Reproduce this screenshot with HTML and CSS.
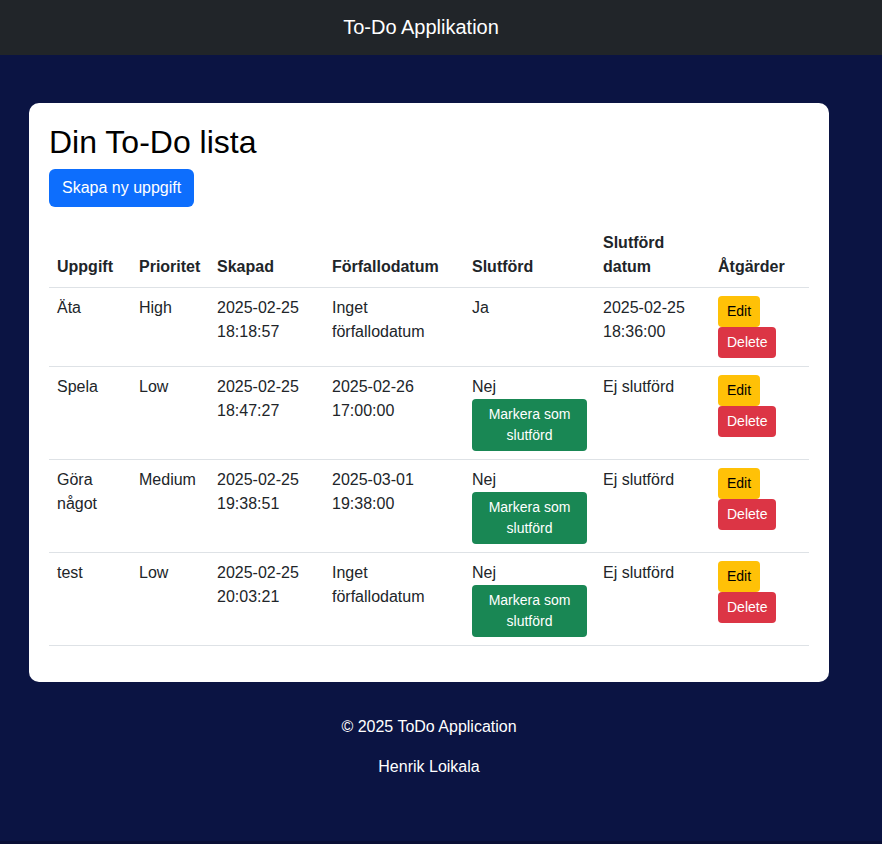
FILE: index.html
```html
<!DOCTYPE html>
<html lang="sv">
<head>
  <meta charset="utf-8">
  <meta name="viewport" content="width=device-width, initial-scale=1">
  <title>To-Do Applikation</title>
  <link rel="stylesheet" href="styles.css">
</head>
<body>
  <nav class="navbar">
    <a class="navbar-brand" href="#">To-Do Applikation</a>
  </nav>

  <main class="card">
    <h1 class="card-title">Din To-Do lista</h1>
    <a class="btn btn-primary" href="#">Skapa ny uppgift</a>

    <table class="tasks">
      <colgroup>
        <col class="col-task">
        <col class="col-priority">
        <col class="col-created">
        <col class="col-due">
        <col class="col-done">
        <col class="col-done-date">
        <col class="col-actions">
      </colgroup>
      <thead>
        <tr>
          <th scope="col">Uppgift</th>
          <th scope="col">Prioritet</th>
          <th scope="col">Skapad</th>
          <th scope="col">Förfallodatum</th>
          <th scope="col">Slutförd</th>
          <th scope="col">Slutförd datum</th>
          <th scope="col">Åtgärder</th>
        </tr>
      </thead>
      <tbody>
        <tr>
          <td>Äta</td>
          <td>High</td>
          <td>2025-02-25 18:18:57</td>
          <td>Inget förfallodatum</td>
          <td>Ja</td>
          <td>2025-02-25 18:36:00</td>
          <td>
            <div class="actions">
              <a class="btn btn-sm btn-warning" href="#">Edit</a>
              <button class="btn btn-sm btn-danger" type="button">Delete</button>
            </div>
          </td>
        </tr>
        <tr>
          <td>Spela</td>
          <td>Low</td>
          <td>2025-02-25 18:47:27</td>
          <td>2025-02-26 17:00:00</td>
          <td>Nej <button class="btn btn-sm btn-success" type="button">Markera som slutförd</button></td>
          <td>Ej slutförd</td>
          <td>
            <div class="actions">
              <a class="btn btn-sm btn-warning" href="#">Edit</a>
              <button class="btn btn-sm btn-danger" type="button">Delete</button>
            </div>
          </td>
        </tr>
        <tr>
          <td>Göra något</td>
          <td>Medium</td>
          <td>2025-02-25 19:38:51</td>
          <td>2025-03-01 19:38:00</td>
          <td>Nej <button class="btn btn-sm btn-success" type="button">Markera som slutförd</button></td>
          <td>Ej slutförd</td>
          <td>
            <div class="actions">
              <a class="btn btn-sm btn-warning" href="#">Edit</a>
              <button class="btn btn-sm btn-danger" type="button">Delete</button>
            </div>
          </td>
        </tr>
        <tr>
          <td>test</td>
          <td>Low</td>
          <td>2025-02-25 20:03:21</td>
          <td>Inget förfallodatum</td>
          <td>Nej <button class="btn btn-sm btn-success" type="button">Markera som slutförd</button></td>
          <td>Ej slutförd</td>
          <td>
            <div class="actions">
              <a class="btn btn-sm btn-warning" href="#">Edit</a>
              <button class="btn btn-sm btn-danger" type="button">Delete</button>
            </div>
          </td>
        </tr>
      </tbody>
    </table>
  </main>

  <footer class="footer">
    <p>© 2025 ToDo Application</p>
    <p>Henrik Loikala</p>
  </footer>
</body>
</html>
```

FILE: styles.css
```css
* {
  box-sizing: border-box;
}

body {
  display: flex;
  flex-direction: column;
  min-height: 100vh;
  margin: 0;
  border-bottom: 3px solid #0a0f36;
  background: #0b1443;
  color: #212529;
  font-family: "Liberation Sans", Arial, sans-serif;
  font-size: 16px;
  line-height: 24px;
}

.navbar {
  display: flex;
  justify-content: center;
  padding: 12px 24px 13px 0;
  background: #212529;
}

.navbar-brand {
  margin-right: 16px;
  color: #fff;
  font-size: 20px;
  line-height: 30px;
  text-decoration: none;
}

.card {
  align-self: center;
  width: calc(100% - 48px);
  max-width: 800px;
  margin-top: 48px;
  /* shifts the centre line to that of the navbar and footer */
  margin-right: 24px;
  padding: 20px;
  border-radius: 10px;
  background: #fff;
}

.card-title {
  margin: 0 0 8px;
  color: #000;
  font-size: 32px;
  font-weight: 400;
  line-height: 38px;
}

.btn {
  display: inline-block;
  padding: 6px 12px;
  border: 1px solid transparent;
  border-radius: 6px;
  font: inherit;
  text-align: center;
  text-decoration: none;
  vertical-align: middle;
  cursor: pointer;
}

.btn-sm {
  padding: 4px 8px;
  border-radius: 4px;
  font-size: 14px;
  line-height: 21px;
}

.btn-primary {
  background: #0d6efd;
  color: #fff;
}

.btn-success {
  background: #198754;
  color: #fff;
}

.btn-warning {
  background: #ffc107;
  color: #000;
}

.btn-danger {
  background: #dc3545;
  color: #fff;
}

.tasks {
  width: 100%;
  margin: 16px 0;
  border-collapse: collapse;
}

.tasks th,
.tasks td {
  padding: 8px;
  border-bottom: 1px solid #dee2e6;
  text-align: left;
  vertical-align: top;
}

.tasks th {
  vertical-align: bottom;
}

.col-task {
  width: 82px;
}

.col-priority {
  width: 78px;
}

.col-created,
.col-done-date {
  width: 115px;
}

.col-due {
  width: 140px;
}

.col-done {
  width: 131px;
}

.col-actions {
  width: 99px;
}

.actions {
  display: flex;
  flex-direction: column;
  align-items: flex-start;
}

.footer {
  margin-top: 16px;
  padding: 17px 24px 16px 0;
  color: #fff;
  text-align: center;
}

.footer p {
  margin: 0 0 16px;
}
```
